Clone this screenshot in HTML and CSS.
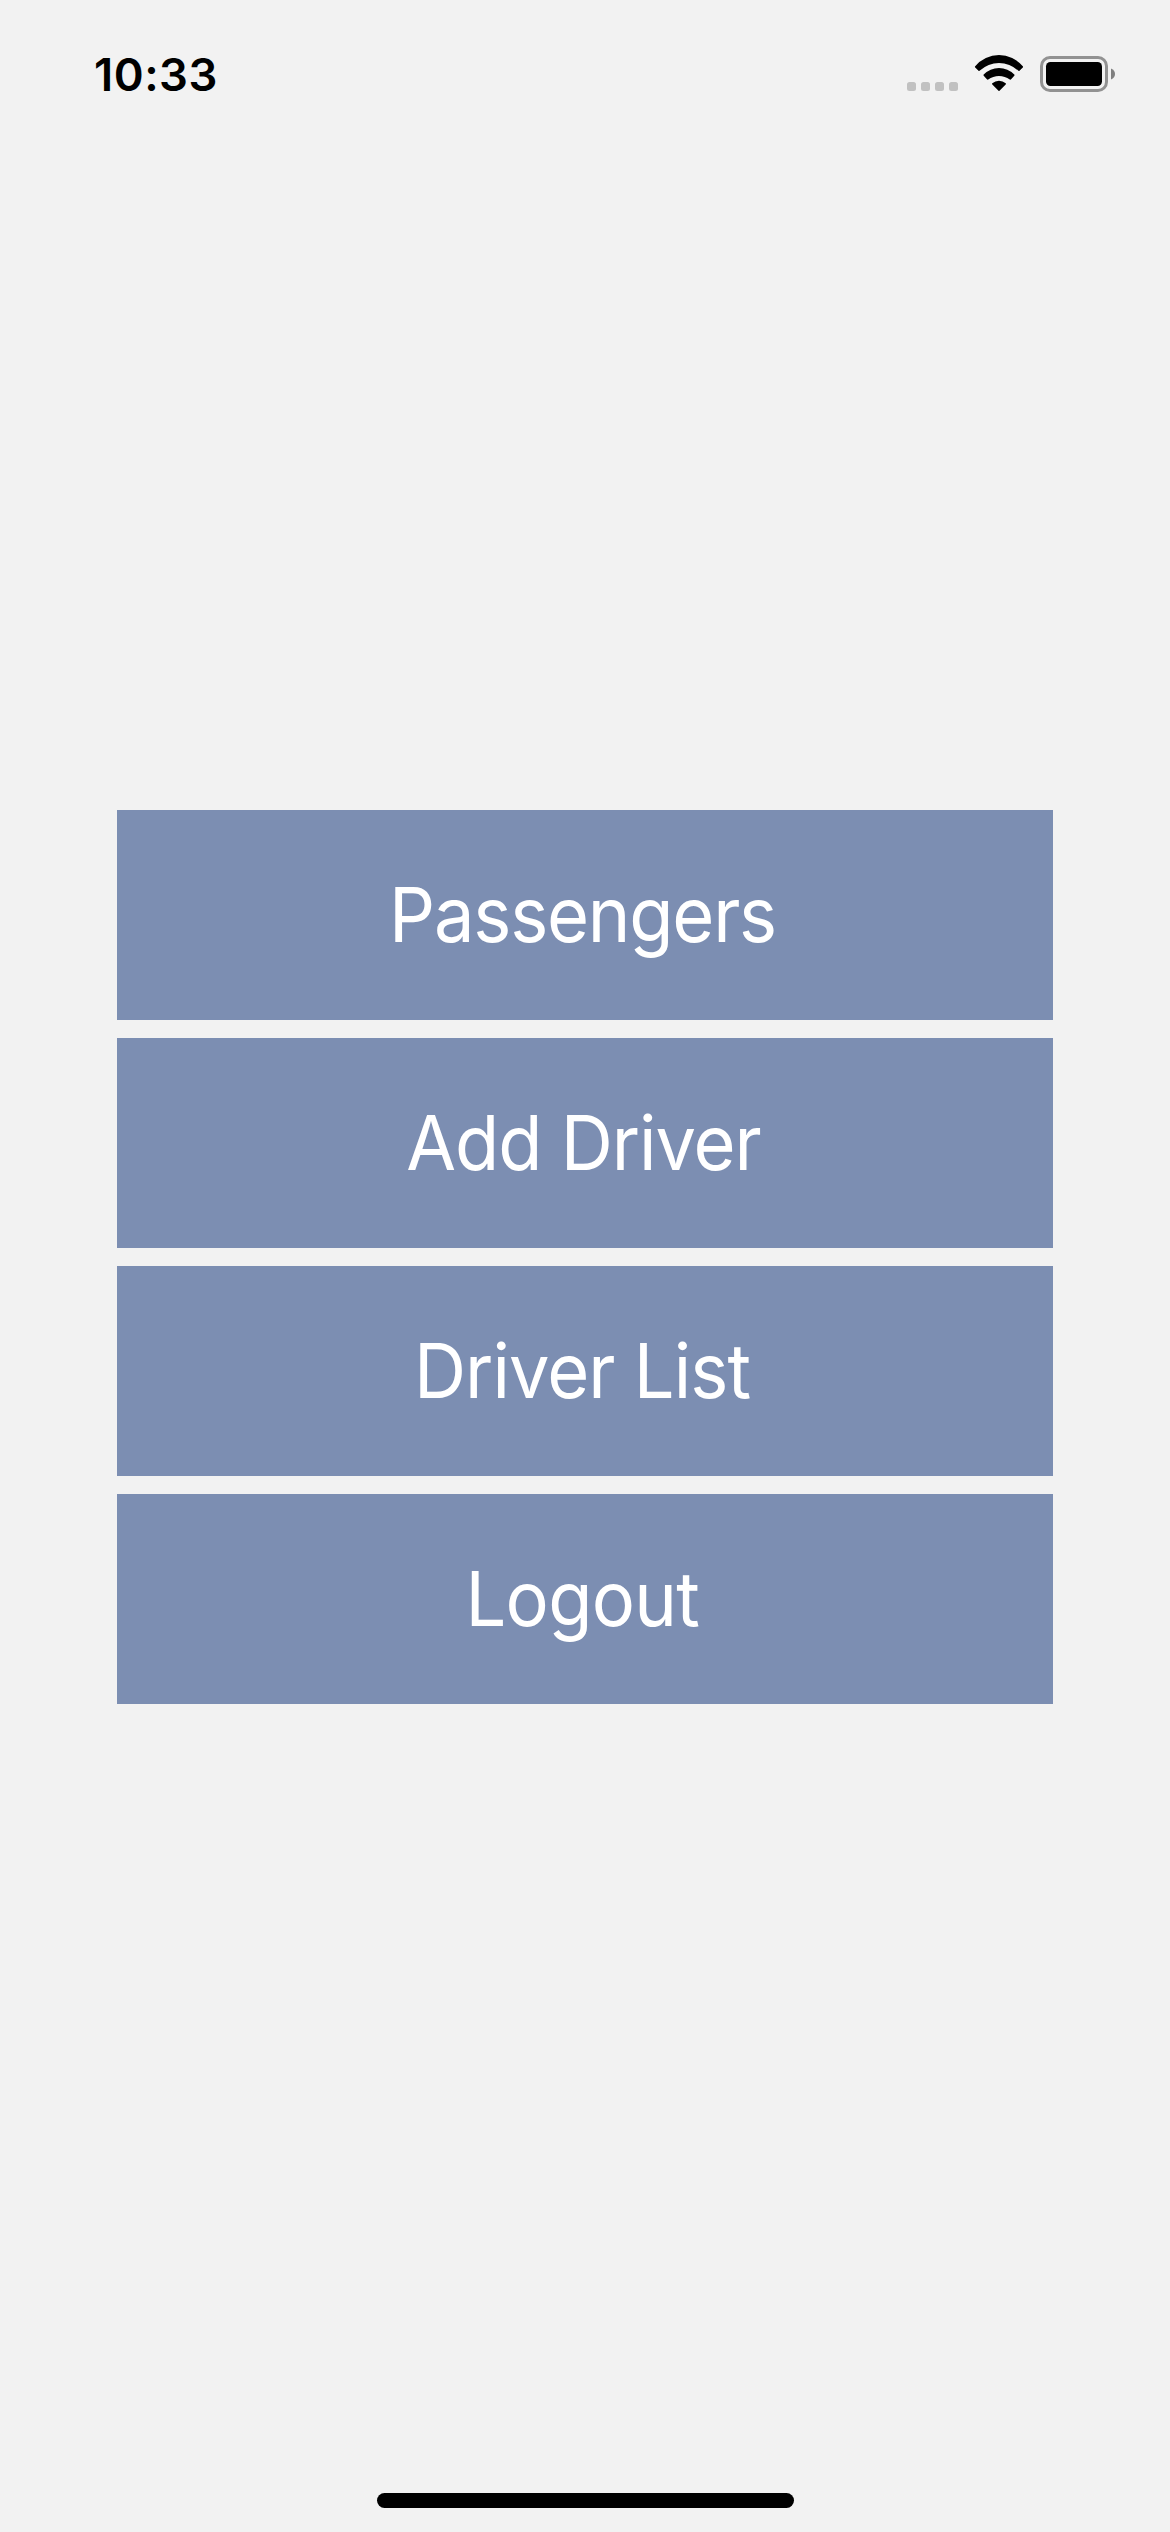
FILE: index.html
```html
<!DOCTYPE html>
<html lang="en">
<head>
  <meta charset="utf-8">
  <title>Menu</title>
  <link rel="stylesheet" href="styles.css">
</head>
<body>
  <header class="status-bar">
    <time class="clock">10:33</time>
    <div class="indicators">
      <div class="signal"><i class="dot"></i><i class="dot"></i><i class="dot"></i><i class="dot"></i></div>
      <svg class="wifi" width="50" height="37" viewBox="0 0 50 37">
        <path d="M1.2 11.2 A31 31 0 0 1 48.8 11.2 Q49.4 11.9 48.8 12.5 L45.5 15.7 Q44.8 16.3 44.1 15.6 A27.8 27.8 0 0 0 5.9 15.6 Q5.2 16.3 4.5 15.7 L1.2 12.5 Q.6 11.9 1.2 11.2Z"/>
        <path d="M9.7 19.6 A21.3 21.3 0 0 1 40.3 19.6 Q40.9 20.2 40.3 20.8 L37.1 24.3 Q36.4 24.9 35.8 24.4 A18.4 18.4 0 0 0 14.2 24.4 Q13.6 24.9 12.9 24.3 L9.7 20.8 Q9.1 20.2 9.7 19.6Z"/>
        <path d="M18.3 28.3 A10 10 0 0 1 31.7 28.3 Q32.3 28.9 31.7 29.5 L25.5 35.8 Q25 36.3 24.5 35.8 L18.3 29.5 Q17.7 28.9 18.3 28.3Z"/>
      </svg>
      <svg class="battery" width="75" height="36" viewBox="0 0 75 36">
        <rect x="1.5" y="1.5" width="65" height="33" rx="8.5" fill="none" stroke="#929292" stroke-width="3"/>
        <rect x="6" y="6" width="56" height="24" rx="4.5"/>
        <path d="M71 12.5 Q75 14.3 75 18 Q75 21.7 71 23.5Z" fill="#808080"/>
      </svg>
    </div>
  </header>
  <main class="menu">
    <button class="menu-button passengers"><span class="label">Passengers</span></button>
    <button class="menu-button add-driver"><span class="label">Add Driver</span></button>
    <button class="menu-button driver-list"><span class="label">Driver List</span></button>
    <button class="menu-button logout"><span class="label">Logout</span></button>
  </main>
  <footer class="home-area"><div class="home-indicator"></div></footer>
</body>
</html>
```
FILE: styles.css
```css
* {
  box-sizing: border-box;
}

body {
  display: flex;
  flex-direction: column;
  width: 1170px;
  height: 2532px;
  margin: 0;
  background: #f2f2f2;
  color: #000;
  font-family: Inter, "Liberation Sans", sans-serif;
}

.status-bar {
  display: flex;
  justify-content: space-between;
  height: 141px;
  padding: 47px 55px 0 94px;
}

.clock {
  height: 55px;
  font-size: 45.4px;
  font-weight: 570;
  line-height: 55px;
  letter-spacing: 0.5px;
}

.indicators {
  display: flex;
  padding-top: 8px;
}

.signal {
  display: flex;
  gap: 5px;
  margin: 27px 16px 0 0;
}

.dot {
  width: 9px;
  height: 9px;
  border-radius: 2.5px;
  background: #c1c1c1;
}

.wifi {
  margin-right: 16px;
}

.battery {
  margin-top: 1px;
}

.menu {
  display: flex;
  flex: 1;
  flex-direction: column;
  gap: 18px;
  padding: 669px 117px 0;
}

.menu-button {
  height: 210px;
  padding: 0;
  border: 0;
  background: #7c8eb2;
  color: #fff;
  font-family: inherit;
  font-size: 75.6px;
  font-weight: 400;
  line-height: 90px;
}

.label {
  display: inline-block;
  transform: scaleX(0.955);
}

.passengers {
  padding-right: 5px;
  letter-spacing: -1.3px;
}

.add-driver {
  padding-right: 2px;
  letter-spacing: -1.1px;
}

.driver-list {
  padding-right: 7px;
  letter-spacing: -1px;
}

.logout {
  padding-right: 6px;
  letter-spacing: -0.75px;
}

.home-area {
  display: flex;
  justify-content: center;
  height: 39px;
}

.home-indicator {
  width: 417px;
  height: 15px;
  margin-left: 1px;
  border-radius: 7.5px;
  background: #000;
}
```
